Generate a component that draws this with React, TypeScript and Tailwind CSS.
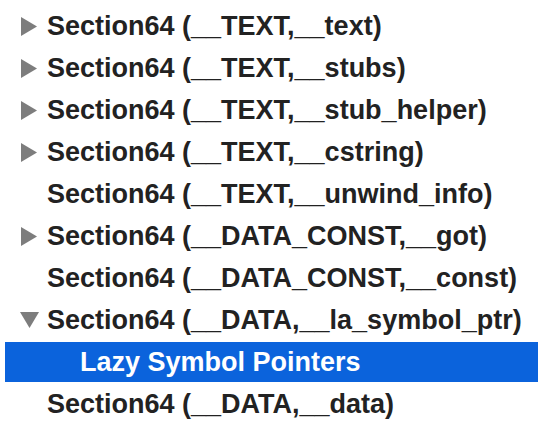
const rows: { label: string; arrow?: "right" | "down"; indent?: boolean; selected?: boolean }[] = [
  { label: "Section64 (__TEXT,__text)", arrow: "right" },
  { label: "Section64 (__TEXT,__stubs)", arrow: "right" },
  { label: "Section64 (__TEXT,__stub_helper)", arrow: "right" },
  { label: "Section64 (__TEXT,__cstring)", arrow: "right" },
  { label: "Section64 (__TEXT,__unwind_info)" },
  { label: "Section64 (__DATA_CONST,__got)", arrow: "right" },
  { label: "Section64 (__DATA_CONST,__const)" },
  { label: "Section64 (__DATA,__la_symbol_ptr)", arrow: "down" },
  { label: "Lazy Symbol Pointers", indent: true, selected: true },
  { label: "Section64 (__DATA,__data)" },
];

const Arrow = ({ dir }: { dir: "right" | "down" }) =>
  dir === "right" ? (
    <svg width="16" height="19" viewBox="0 0 16 19" className="shrink-0">
      <path d="M0 0 L16 9.5 L0 19 Z" fill="#7d7d7d" />
    </svg>
  ) : (
    <svg width="19" height="16" viewBox="0 0 19 16" className="shrink-0">
      <path d="M0 0 L19 0 L9.5 16 Z" fill="#7d7d7d" />
    </svg>
  );

export default function App() {
  return (
    <div
      className="w-[538px] h-[440px] bg-white pt-[6px] overflow-hidden"
      style={{ fontFamily: '"Liberation Sans", Arial, sans-serif' }}
    >
      {rows.map((r) => (
        <div key={r.label} className="h-[42px]">
          <div
            className={
              "h-[40px] ml-[5px] flex items-center text-[27px] font-bold whitespace-nowrap " +
              (r.selected ? "bg-[#0b63dc] text-white" : "text-[#222222]")
            }
          >
            <div className="w-[42px] shrink-0 flex items-center justify-center pl-[6px]">
              {r.arrow && <Arrow dir={r.arrow} />}
            </div>
            <span className={r.indent ? "pl-[33px]" : ""}>{r.label}</span>
          </div>
        </div>
      ))}
    </div>
  );
}
